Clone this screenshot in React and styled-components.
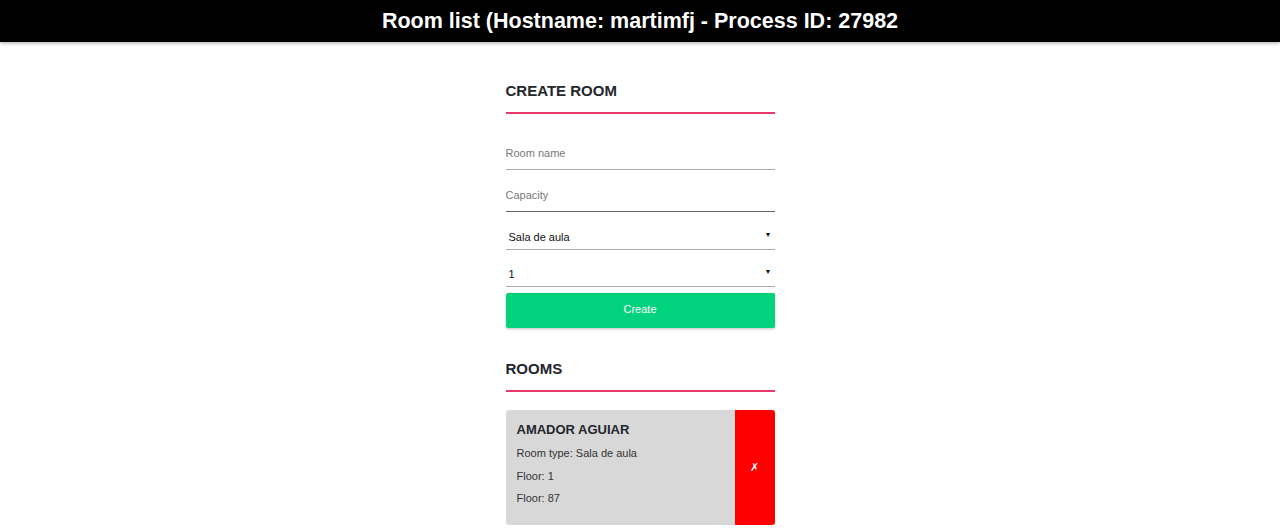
import styled, { createGlobalStyle } from 'styled-components';

const GlobalStyle = createGlobalStyle`
  body {
    margin: 0;
    background: #fff;
    font-family: "Liberation Sans", Arial, sans-serif;
    color: #222;
  }
`;

const Header = styled.header`
  height: 42px;
  background: #000;
  color: #fff;
  display: flex;
  align-items: center;
  justify-content: center;
  box-shadow: 0 1px 4px rgba(0, 0, 0, 0.35);
`;

const Title = styled.h1`
  margin: 0;
  font-size: 21.5px;
  font-weight: bold;
`;

const Main = styled.main`
  width: 269px;
  margin: 0 auto;
  padding-top: 39px;
`;

const SectionTitle = styled.h2`
  margin: 0;
  font-size: 15px;
  font-weight: bold;
  color: #23262b;
  line-height: 20px;
  padding-bottom: 11px;
  border-bottom: 2px solid #ea3a6a;
`;

const Form = styled.form`
  display: flex;
  flex-direction: column;
  padding-top: 20px;
`;

const Input = styled.input`
  box-sizing: border-box;
  border: none;
  border-bottom: 1px solid ${(p) => p.$line || '#aaa'};
  outline: none;
  font-family: inherit;
  font-size: 11px;
  height: 36px;
  padding: 3px 0 0;
  margin-bottom: 6px;
  color: #333;

  &::placeholder {
    color: #777;
  }
`;

const SelectRow = styled.div`
  position: relative;
  height: 30px;
  border-bottom: 1px solid #aaa;
  margin-top: ${(p) => p.$top || 0}px;
  display: flex;
  align-items: flex-end;
  padding: 0 0 6px 3px;
  box-sizing: border-box;
  font-size: 11px;
  color: #111;
`;

const Caret = styled.span`
  position: absolute;
  right: 3px;
  top: 11px;
  font-size: 7px;
  color: #111;
`;

const CreateButton = styled.button`
  margin-top: 6px;
  height: 35px;
  border: none;
  border-radius: 2px;
  background: #00d27e;
  color: #fff;
  font-family: inherit;
  font-size: 11px;
  padding: 0 0 3px;
  box-shadow: 0 1px 3px rgba(0, 0, 0, 0.25);
`;

const RoomsSection = styled.section`
  margin-top: 31px;
`;

const Card = styled.div`
  margin-top: 18px;
  display: flex;
  height: 115px;
  border-radius: 3px;
  overflow: hidden;
  background: #d8d8d8;
`;

const CardBody = styled.div`
  flex: 1;
  padding: 12px 11px;
`;

const RoomName = styled.h3`
  margin: 0 0 4px;
  font-size: 13px;
  font-weight: bold;
  color: #23262b;
  line-height: 16px;
`;

const Info = styled.p`
  margin: 0;
  font-size: 11px;
  line-height: 22.5px;
  color: #333;
`;

const DeleteButton = styled.button`
  width: 40px;
  border: none;
  background: #ff0000;
  color: #fff;
  font-size: 11px;
  font-family: "DejaVu Sans", sans-serif;
  padding: 0;
`;

const rooms = [
  { name: 'AMADOR AGUIAR', type: 'Sala de aula', floor: 1, capacity: 87 },
];

export default function App() {
  return (
    <>
      <GlobalStyle />
      <Header>
        <Title>Room list (Hostname: martimfj - Process ID: 27982</Title>
      </Header>
      <Main>
        <SectionTitle>CREATE ROOM</SectionTitle>
        <Form onSubmit={(e) => e.preventDefault()}>
          <Input placeholder="Room name" />
          <Input placeholder="Capacity" $line="#666" />
          <SelectRow $top={2}>
            Sala de aula
            <Caret>▼</Caret>
          </SelectRow>
          <SelectRow $top={7}>
            1
            <Caret>▼</Caret>
          </SelectRow>
          <CreateButton type="submit">Create</CreateButton>
        </Form>
        <RoomsSection>
          <SectionTitle>ROOMS</SectionTitle>
          {rooms.map((room) => (
            <Card key={room.name}>
              <CardBody>
                <RoomName>{room.name}</RoomName>
                <Info>Room type: {room.type}</Info>
                <Info>Floor: {room.floor}</Info>
                <Info>Floor: {room.capacity}</Info>
              </CardBody>
              <DeleteButton>✗</DeleteButton>
            </Card>
          ))}
        </RoomsSection>
      </Main>
    </>
  );
}
